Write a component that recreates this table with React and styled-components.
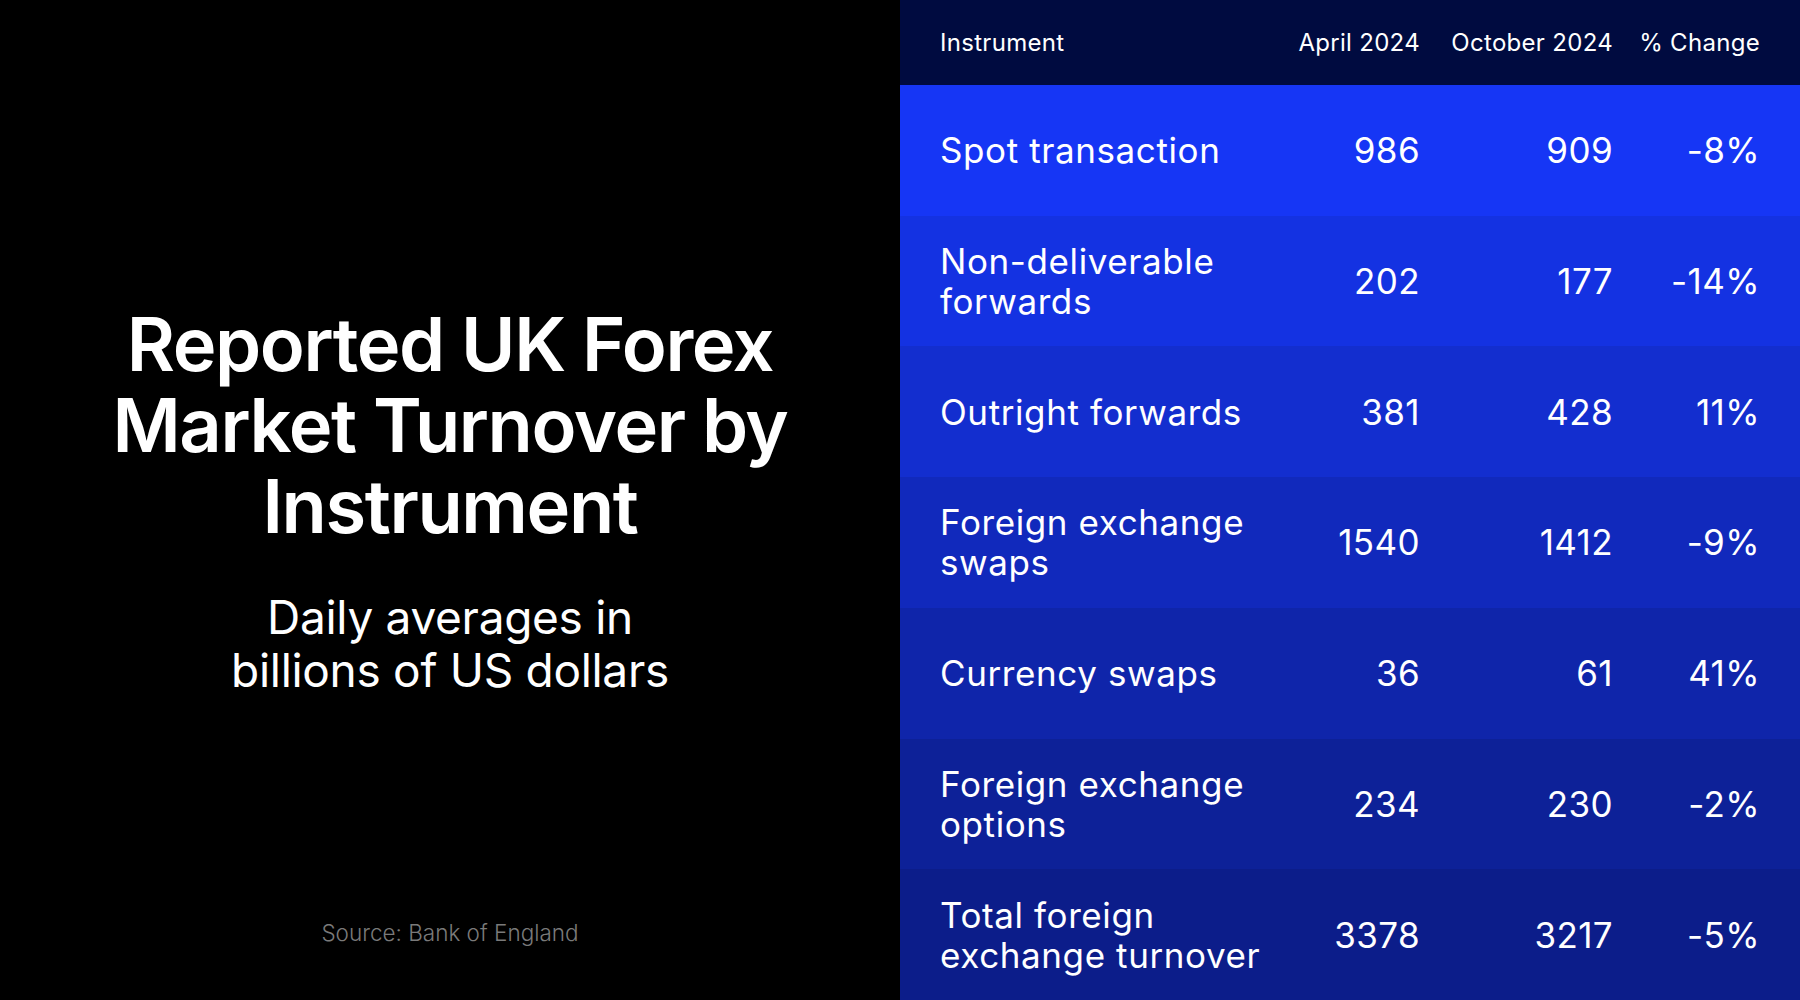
import React from "react";
import styled, { createGlobalStyle } from "styled-components";

const GlobalStyle = createGlobalStyle`
  html, body {
    margin: 0;
    padding: 0;
    background: #000;
  }
  body {
    font-family: Inter, "Noto Sans", sans-serif;
    color: #fff;
  }
`;

const rows = [
  { name: "Spot transaction", april: "986", october: "909", change: "-8%" },
  { name: "Non-deliverable forwards", april: "202", october: "177", change: "-14%" },
  { name: "Outright forwards", april: "381", october: "428", change: "11%" },
  { name: "Foreign exchange swaps", april: "1540", october: "1412", change: "-9%" },
  { name: "Currency swaps", april: "36", october: "61", change: "41%" },
  { name: "Foreign exchange options", april: "234", october: "230", change: "-2%" },
  { name: "Total foreign exchange turnover", april: "3378", october: "3217", change: "-5%" },
];

const shades = ["#1636f5", "#1432e2", "#132ecf", "#1129bc", "#0f25aa", "#0d2198", "#0c1d8a"];

const Page = styled.div`
  width: 1800px;
  height: 1000px;
  display: grid;
  grid-template-columns: 900px 900px;
  overflow: hidden;
`;

const Intro = styled.section`
  background: #000;
  display: grid;
  grid-template-rows: 1fr auto 1fr;
  justify-items: center;
  text-align: center;
`;

const Heading = styled.div`
  grid-row: 2;
  display: flex;
  flex-direction: column;
  align-items: center;
  gap: 44px;
`;

const Title = styled.h1`
  margin: 0;
  width: 720px;
  font-size: 74px;
  font-weight: 600;
  line-height: 81px;
  letter-spacing: -1.4px;
`;

const Subtitle = styled.p`
  margin: 0;
  width: 460px;
  font-size: 46px;
  font-weight: 400;
  line-height: 53px;
  letter-spacing: -0.3px;
`;

const Source = styled.div`
  grid-row: 3;
  align-self: end;
  padding-bottom: 54px;
  font-size: 22.5px;
  font-weight: 300;
  color: #7a7a7a;
`;

const Table = styled.section`
  display: grid;
  grid-template-rows: 85px repeat(7, 1fr);
`;

const Row = styled.div`
  display: grid;
  grid-template-columns: 340px 1fr 193px 147px;
  align-items: center;
  padding: 0 40px 0 40px;
  background: ${(p) => p.$bg};
`;

const HeadCell = styled.div`
  font-size: 24px;
  font-weight: 400;
  letter-spacing: 0.3px;
  text-align: ${(p) => (p.$num ? "right" : "left")};
`;

const Label = styled.div`
  font-size: 35px;
  font-weight: 400;
  line-height: 40px;
  letter-spacing: 0.6px;
  padding-right: 10px;
`;

const Value = styled.div`
  font-size: 35px;
  font-weight: 400;
  letter-spacing: 0.4px;
  text-align: right;
`;

export default function App() {
  return (
    <>
      <GlobalStyle />
      <Page>
        <Intro>
          <Heading>
            <Title>Reported UK Forex Market Turnover by Instrument</Title>
            <Subtitle>Daily averages in billions of US dollars</Subtitle>
          </Heading>
          <Source>Source: Bank of England</Source>
        </Intro>
        <Table>
          <Row $bg="#000b40">
            <HeadCell>Instrument</HeadCell>
            <HeadCell $num>April 2024</HeadCell>
            <HeadCell $num>October 2024</HeadCell>
            <HeadCell $num>% Change</HeadCell>
          </Row>
          {rows.map((r, i) => (
            <Row key={r.name} $bg={shades[i]}>
              <Label>{r.name}</Label>
              <Value>{r.april}</Value>
              <Value>{r.october}</Value>
              <Value>{r.change}</Value>
            </Row>
          ))}
        </Table>
      </Page>
    </>
  );
}
